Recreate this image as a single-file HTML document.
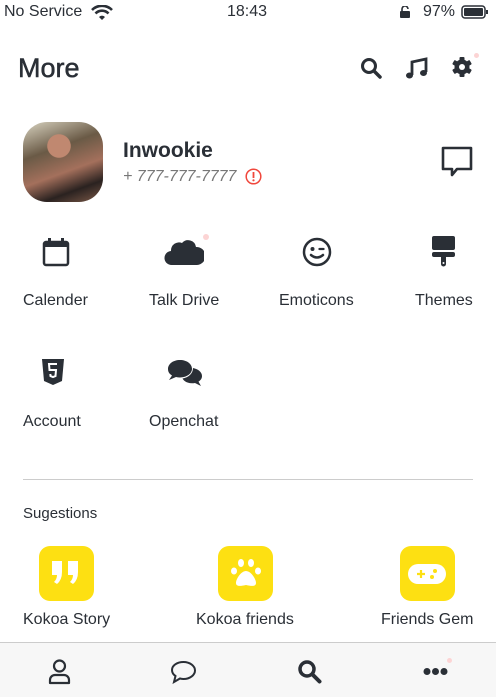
<!DOCTYPE html>
<html><head><style>
*{margin:0;padding:0;box-sizing:border-box}
body{width:496px;height:697px;overflow:hidden;background:#fff;font-family:"Liberation Sans",sans-serif;color:#2a2f36;position:relative}
.a{position:absolute;white-space:nowrap}
.lbl{font-size:16px}
.y{position:absolute;width:55px;height:55px;border-radius:11px;background:#fde012}
</style></head><body>
<div class="a" style="left:4px;top:3px;font-size:16px">No Service</div>
<svg class="a" style="left:91px;top:5px" width="22" height="15" viewBox="0 0 22 15"><path d="M1 5a14 14 0 0 1 20 0" stroke="#2a2f36" stroke-width="2.6" fill="none"/><path d="M4.5 8.5a9 9 0 0 1 13 0" stroke="#2a2f36" stroke-width="2.6" fill="none"/><path d="M8 12a4 4 0 0 1 6 0l-3 3z" fill="#2a2f36"/></svg>
<div class="a" style="left:227px;top:3px;font-size:16px">18:43</div>
<svg class="a" style="left:399px;top:6px" width="12" height="12" viewBox="0 0 12 12"><rect x="1" y="5" width="10" height="7" rx="1" fill="#2a2f36"/><path d="M3 5V3a3 3 0 0 1 6 0" stroke="#2a2f36" stroke-width="1.6" fill="none"/></svg>
<div class="a" style="left:423px;top:3px;font-size:16px">97%</div>
<svg class="a" style="left:461px;top:5px" width="28" height="14" viewBox="0 0 28 14"><rect x="1" y="1" width="23" height="12" rx="3" stroke="#2a2f36" stroke-width="1.5" fill="none"/><rect x="3" y="3" width="19" height="8" rx="1" fill="#2a2f36"/><rect x="25" y="5" width="2" height="4" fill="#2a2f36"/></svg>

<div class="a" style="left:18px;top:53px;font-size:27px;-webkit-text-stroke:0.5px #2a2f36">More</div>
<svg class="a" style="left:360px;top:57px" width="23" height="23" viewBox="0 0 23 23"><circle cx="9" cy="9" r="6.5" stroke="#2a2f36" stroke-width="3" fill="none"/><path d="M14 14l6 6" stroke="#2a2f36" stroke-width="3.5" stroke-linecap="round"/></svg>
<svg class="a" style="left:405px;top:57px" width="23" height="23" viewBox="0 0 23 23"><path d="M7 18V5l14-3v13" stroke="#2a2f36" stroke-width="2.8" fill="none"/><ellipse cx="4.5" cy="18.5" rx="3.5" ry="3" fill="#2a2f36"/><ellipse cx="18.5" cy="16" rx="3.5" ry="3" fill="#2a2f36"/></svg>
<svg class="a" style="left:451px;top:56px" width="22" height="22" viewBox="0 0 22 22"><g fill="#2a2f36"><circle cx="11" cy="11" r="7.5"/><rect x="8.5" y="1" width="5" height="20" rx="1"/><rect x="8.5" y="1" width="5" height="20" rx="1" transform="rotate(60 11 11)"/><rect x="8.5" y="1" width="5" height="20" rx="1" transform="rotate(120 11 11)"/></g><circle cx="11" cy="11" r="3" fill="#fff"/></svg>
<div class="a" style="left:474px;top:53px;width:5px;height:5px;border-radius:50%;background:#fcd4d4"></div>

<div class="a" style="left:23px;top:122px;width:80px;height:80px;border-radius:24px;background:radial-gradient(circle at 45% 30%,#c08870 0 16%,transparent 17%),linear-gradient(160deg,#d8d3c0 0%,#6a5a46 35%,#a4705c 60%,#2a2220 80%,#7d5a48 100%)"></div>
<div class="a" style="left:123px;top:139px;font-size:21px;font-weight:bold">Inwookie</div>
<div class="a" style="left:123px;top:168px;font-size:16px;color:#777;font-style:italic">+ 777-777-7777</div>
<svg class="a" style="left:245px;top:168px" width="17" height="17" viewBox="0 0 17 17"><circle cx="8.5" cy="8.5" r="7.3" stroke="#f0473c" stroke-width="1.5" fill="none"/><rect x="7.6" y="4" width="1.8" height="6" fill="#f0473c"/><circle cx="8.5" cy="12.3" r="1.1" fill="#f0473c"/></svg>
<svg class="a" style="left:440px;top:145px" width="34" height="34" viewBox="0 0 34 34"><path d="M3 3h28v21H17l-5 6v-6H3z" stroke="#2a2f36" stroke-width="2.6" fill="none" stroke-linejoin="round"/></svg>

<svg class="a" style="left:42px;top:237px" width="28" height="30" viewBox="0 0 28 30"><rect x="2" y="5" width="24" height="23" rx="2" stroke="#2a2f36" stroke-width="2.5" fill="none"/><rect x="2" y="5" width="24" height="5" fill="#2a2f36"/><rect x="6" y="1" width="3" height="6" fill="#2a2f36"/><rect x="19" y="1" width="3" height="6" fill="#2a2f36"/></svg>
<svg class="a" style="left:164px;top:238px" width="40" height="28" viewBox="0 0 40 28"><path d="M8 27a7 7 0 0 1-1-14 8 8 0 0 1 11-8 8 8 0 0 1 14 4 8 8 0 0 1 1 18z" fill="#2a2f36"/></svg>
<div class="a" style="left:203px;top:234px;width:6px;height:6px;border-radius:50%;background:#fcd4d4"></div>
<svg class="a" style="left:302px;top:237px" width="30" height="30" viewBox="0 0 30 30"><circle cx="15" cy="15" r="13" stroke="#2a2f36" stroke-width="2.5" fill="none"/><circle cx="10.5" cy="12" r="2" fill="#2a2f36"/><path d="M17.5 12h4" stroke="#2a2f36" stroke-width="2.3" stroke-linecap="round"/><path d="M9 18q6 5 12 0" stroke="#2a2f36" stroke-width="2.5" fill="none" stroke-linecap="round"/></svg>
<svg class="a" style="left:431px;top:235px" width="25" height="32" viewBox="0 0 25 32"><rect x="1" y="1" width="23" height="14" rx="2" fill="#2a2f36"/><rect x="1" y="17" width="23" height="5" rx="2" fill="#2a2f36"/><path d="M10 22h5v7a2.5 2.5 0 0 1-5 0z" fill="#2a2f36"/><circle cx="12.5" cy="28" r="1" fill="#fff"/></svg>
<div class="a lbl" style="left:23px;top:292px">Calender</div>
<div class="a lbl" style="left:149px;top:292px">Talk Drive</div>
<div class="a lbl" style="left:279px;top:292px">Emoticons</div>
<div class="a lbl" style="left:415px;top:292px">Themes</div>

<svg class="a" style="left:42px;top:359px" width="22" height="27" viewBox="0 0 22 27"><path d="M0 0h22l-2 22-9 4-9-4z" fill="#2a2f36"/><path d="M15 5H7l.5 6H14l-.5 6-2.5 1-2.5-1-.2-2" stroke="#fff" stroke-width="2" fill="none"/></svg>
<svg class="a" style="left:167px;top:359px" width="36" height="28" viewBox="0 0 36 28"><path d="M13 1C6 1 1 5 1 10c0 3 1.5 5 4 6.5L2 21l7-3c1.3.3 2.6.5 4 .5 7 0 12-4 12-8.7S20 1 13 1z" fill="#2a2f36"/><path d="M26 9c5 1 9 4 9 8 0 2.5-1.3 4.3-3.5 5.6L34 27l-6-3c-1 .2-2 .3-3 .3-4.5 0-8-2-9.5-4.8 6-.8 10.5-5 10.5-10.5z" fill="#2a2f36"/></svg>
<div class="a lbl" style="left:23px;top:413px">Account</div>
<div class="a lbl" style="left:149px;top:413px">Openchat</div>

<div class="a" style="left:23px;top:479px;width:450px;height:1px;background:#ccc"></div>
<div class="a" style="left:23px;top:505px;font-size:15px">Sugestions</div>

<div class="y" style="left:39px;top:546px"></div>
<svg class="a" style="left:51px;top:560px" width="30" height="28" viewBox="0 0 30 28"><path d="M1 1h10v11q0 8-5 12l-3-2q3-3 3-7H1z M17 1h10v11q0 8-5 12l-3-2q3-3 3-7h-5z" fill="#fff"/></svg>
<div class="y" style="left:218px;top:546px"></div>
<svg class="a" style="left:230px;top:558px" width="32" height="30" viewBox="0 0 32 30"><g fill="#fff"><ellipse cx="11" cy="5" rx="3" ry="4"/><ellipse cx="21" cy="5" rx="3" ry="4"/><ellipse cx="4" cy="13" rx="3" ry="3.5"/><ellipse cx="28" cy="13" rx="3" ry="3.5"/><path d="M16 13c-5 0-10 8-10 12 0 4 5 3 10 2 5 1 10 2 10-2 0-4-5-12-10-12z"/></g></svg>
<div class="y" style="left:400px;top:546px"></div>
<svg class="a" style="left:407px;top:563px" width="40" height="22" viewBox="0 0 40 22"><rect x="1" y="1" width="38" height="20" rx="10" fill="#fff"/><path d="M10 11h8M14 7v8" stroke="#fde012" stroke-width="2.2"/><circle cx="28" cy="8" r="2" fill="#fde012"/><circle cx="25" cy="14" r="2" fill="#fde012"/></svg>
<div class="a lbl" style="left:23px;top:611px">Kokoa Story</div>
<div class="a lbl" style="left:196px;top:611px">Kokoa friends</div>
<div class="a lbl" style="left:381px;top:611px">Friends Gem</div>

<div class="a" style="left:0;top:642px;width:496px;height:55px;background:#f7f7f7;border-top:1px solid #ccc"></div>
<svg class="a" style="left:48px;top:659px" width="23" height="26" viewBox="0 0 23 26"><circle cx="11.5" cy="7" r="5.5" stroke="#2a2f36" stroke-width="2.2" fill="none"/><path d="M2 24v-3a5 5 0 0 1 5-5h9a5 5 0 0 1 5 5v3z" stroke="#2a2f36" stroke-width="2.2" fill="none" stroke-linejoin="round"/></svg>
<svg class="a" style="left:170px;top:660px" width="27" height="24" viewBox="0 0 27 24"><path d="M13.5 2C7 2 2 5.5 2 10c0 2.5 1.3 4.5 3.5 6L4 22l6-3.5c1.1.3 2.3.5 3.5.5C20 19 25 15 25 10.5S20 2 13.5 2z" stroke="#2a2f36" stroke-width="2" fill="none"/></svg>
<svg class="a" style="left:297px;top:659px" width="26" height="26" viewBox="0 0 26 26"><circle cx="10" cy="10" r="7" stroke="#2a2f36" stroke-width="3.5" fill="none"/><path d="M15.5 15.5l7 7" stroke="#2a2f36" stroke-width="4" stroke-linecap="round"/></svg>
<svg class="a" style="left:423px;top:667px" width="25" height="9" viewBox="0 0 25 9"><circle cx="4" cy="4.5" r="3.5" fill="#2a2f36"/><circle cx="12.5" cy="4.5" r="3.5" fill="#2a2f36"/><circle cx="21" cy="4.5" r="3.5" fill="#2a2f36"/></svg>
<div class="a" style="left:447px;top:658px;width:5px;height:5px;border-radius:50%;background:#fcd4d4"></div>
</body></html>
